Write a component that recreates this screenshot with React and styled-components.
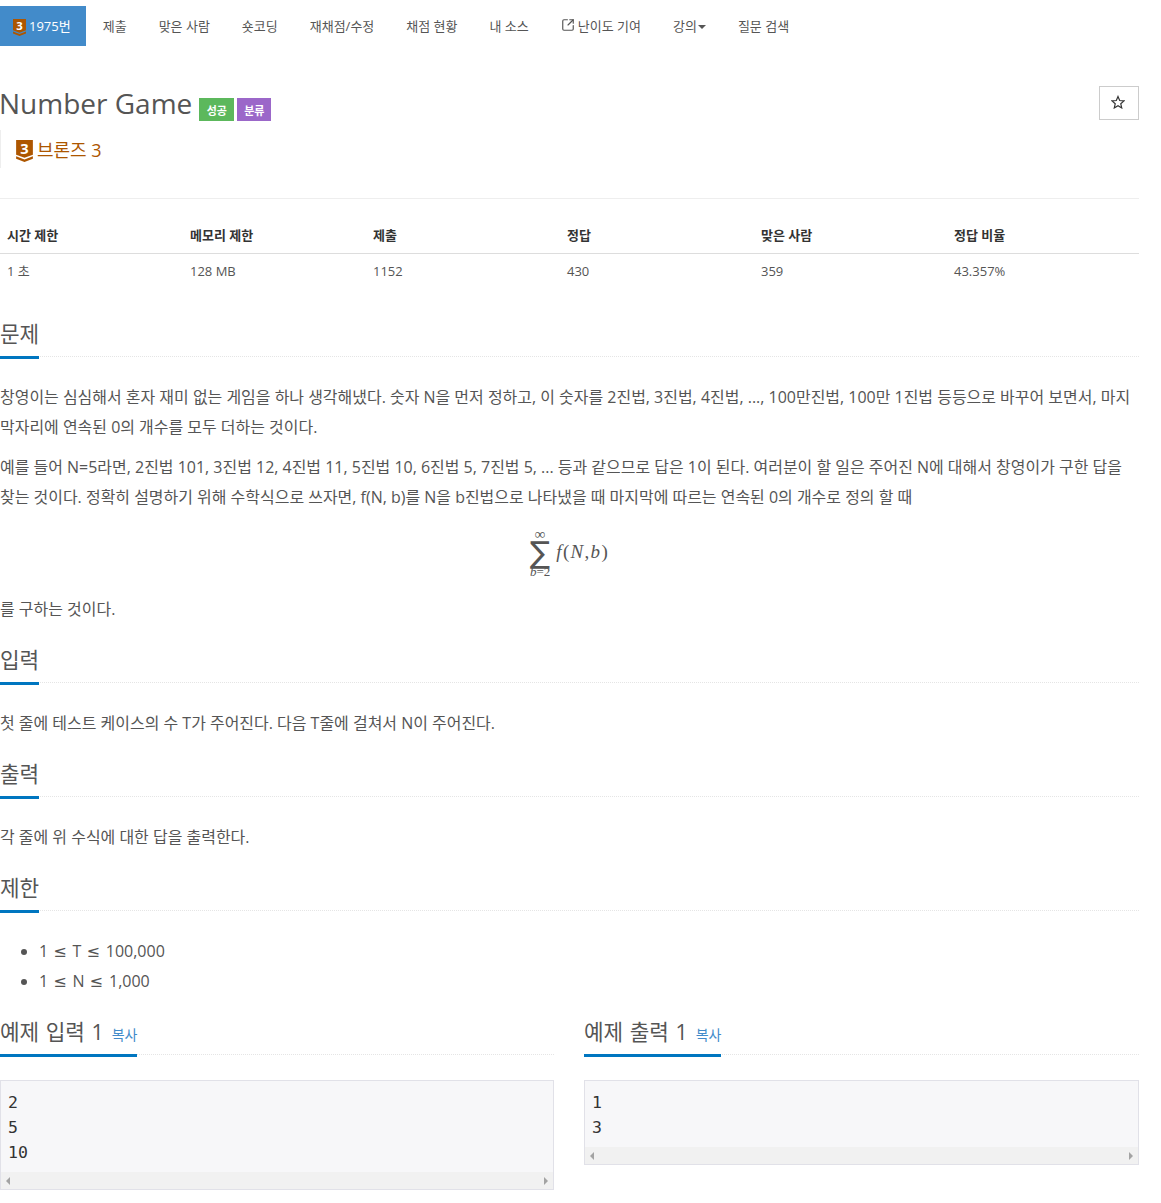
import React from 'react'
import styled, { createGlobalStyle } from 'styled-components'
import { SquareArrowOutUpRight } from 'lucide-react'

const GlobalStyle = createGlobalStyle`
  body {
    margin: 0;
    background: #fff;
    color: #555;
    font-family: "Open Sans", "Noto Sans CJK KR", sans-serif;
    font-size: 13px;
  }
`

const Page = styled.div`
  width: 1139px;
  height: 1203px;
  overflow: hidden;
`

const Nav = styled.ul`
  display: flex;
  margin: 0;
  padding: 6px 0 0;
  list-style: none;
`

const NavItem = styled.li`
  display: flex;
  align-items: center;
  gap: ${p => (p.$gap ?? 1)}px;
  height: 40px;
  box-sizing: border-box;
  padding: ${p => (p.$active ? '0 15px 2px 13px' : '0 16px 2px')};
  margin-right: ${p => (p.$active ? '1px' : '0')};
  background: ${p => (p.$active ? '#428bca' : 'transparent')};
  color: ${p => (p.$active ? '#fff' : '#555')};
`

const Caret = styled.span`
  width: 0;
  height: 0;
  margin-top: 3px;
  border-top: 4px solid #555;
  border-left: 4px solid transparent;
  border-right: 4px solid transparent;
`

const TitleRow = styled.div`
  display: flex;
  align-items: flex-start;
  margin-top: 38px;
  height: 46px;
`

const Title = styled.h1`
  margin: 0 0 0 -1px;
  font-size: 28px;
  font-weight: 400;
  line-height: 38px;
  color: #555;
`

const Label = styled.span`
  display: inline-flex;
  align-items: center;
  justify-content: center;
  width: ${p => p.$width}px;
  height: 23px;
  margin-top: 14px;
  margin-left: ${p => p.$gap}px;
  background: ${p => p.$color};
  color: #fff;
  font-size: 11px;
  font-weight: 700;
`

const StarButton = styled.button`
  display: flex;
  align-items: center;
  justify-content: center;
  width: 40px;
  height: 34px;
  margin-left: auto;
  margin-top: 2px;
  padding: 0 3px 2px 0;
  background: #fff;
  border: 1px solid #ccc;
  color: #333;
`

const Tier = styled.blockquote`
  display: flex;
  align-items: center;
  gap: 4px;
  height: 38px;
  margin: 0;
  padding-left: 15px;
  border-left: 1px solid #eee;
  color: #ad5600;
  font-size: 18px;
`

const TierBadge = styled.svg`
  flex: none;
  margin-top: ${p => p.$top}px;
  overflow: visible;
`

const Rule = styled.hr`
  margin: 30px 0 0;
  border: 0;
  border-top: 1px solid #eee;
`

const Table = styled.div`
  display: grid;
  grid-template-columns: 183px 183px 194px 194px 193px 192px;
  margin-top: 17px;
`

const HeadCell = styled.div`
  height: 38px;
  padding: 10px 7px 0;
  box-sizing: border-box;
  border-bottom: 1px solid #ddd;
  color: #333;
  font-weight: 700;
  font-size: 13px;
  line-height: 18px;
`

const BodyCell = styled.div`
  height: 36px;
  padding: 8px 7px 0;
  box-sizing: border-box;
  line-height: 18px;
`

const Section = styled.section`
  margin-top: ${p => p.$top}px;
`

const Heading = styled.div`
  display: flex;
  align-items: flex-start;
  border-bottom: 1px dotted #e5e5e5;
  height: 36px;
`

const HeadingText = styled.h2`
  margin: 0;
  height: 39px;
  box-sizing: border-box;
  border-bottom: 3px solid #0076c0;
  font-size: 21.3px;
  font-weight: 400;
  word-spacing: 1px;
  line-height: 28px;
  color: #555;
`

const CopyLink = styled.span`
  margin-left: 8px;
  font-size: 14px;
  color: #428bca;
`

const Text = styled.p`
  margin: ${p => p.$top ?? 25}px 0 0;
  font-size: 15.97px;
  line-height: 30px;
  color: #555;
`

const Formula = styled.div`
  display: flex;
  align-items: center;
  justify-content: center;
  gap: 6px;
  height: 82px;
  font-family: "Liberation Serif", "DejaVu Serif", serif;
  color: #555;
`

const SumStack = styled.div`
  display: flex;
  flex-direction: column;
  align-items: center;
  font-size: 13px;
  line-height: 10px;
`

const InfinitySign = styled.span`
  font-size: 15px;
`

const SumSign = styled.span`
  height: 28px;
  font-family: "DejaVu Sans", sans-serif;
  font-size: 30px;
  line-height: 28px;
`

const MathText = styled.span`
  font-size: 19px;
  letter-spacing: 1.3px;
  margin-top: -3px;
`

const Bullets = styled.ul`
  margin: 25px 0 0;
  padding-left: 39px;
  font-size: 16px;
  line-height: 30px;
`

const Leq = styled.span`
  margin: 0 6px 0 5px;
  font-family: "DejaVu Sans", sans-serif;
  line-height: 1;
`

const Samples = styled.div`
  display: grid;
  grid-template-columns: 554px 555px;
  column-gap: 30px;
  margin-top: 22px;
`

const SampleBox = styled.div`
  margin-top: 25px;
  background: #f7f7f9;
  border: 1px solid #e1e1e8;
`

const SampleText = styled.pre`
  margin: 0;
  padding: 9px 7px 0;
  height: ${p => p.$lines * 25 + 7}px;
  box-sizing: content-box;
  font-family: "DejaVu Sans Mono", monospace;
  font-size: 16.5px;
  line-height: 25px;
  color: #333;
`

const ScrollBar = styled.div`
  display: flex;
  align-items: center;
  justify-content: space-between;
  height: 17px;
  padding: 0 5px;
  background: #f1f1f1;
`

const ScrollArrow = styled.span`
  width: 0;
  height: 0;
  border-top: 4px solid transparent;
  border-bottom: 4px solid transparent;
  ${p => (p.$right ? 'border-left: 4px solid #a3a3a3;' : 'border-right: 4px solid #a3a3a3;')}
`

const TierIcon = ({ width, height, top }) => (
  <TierBadge $top={top} width={width} height={height} viewBox="0 0 16 21">
    <path d="M0 0h16v14l-8 3-8-3z" fill="#ad5600" />
    <path d="M0 15.5l8 3 8-3V18l-8 3-8-3z" fill="#ad5600" />
    <text x="8" y="13" fontSize="14" fontWeight="700" textAnchor="middle" fill="#fff" fontFamily="Open Sans, sans-serif">3</text>
  </TierBadge>
)

const StarIcon = () => (
  <svg width="14" height="14" viewBox="0 0 24 24" fill="none" stroke="currentColor" strokeWidth="2">
    <path d="M12 2.5l2.9 6.9 7.4.6-5.6 4.9 1.7 7.3L12 18.4l-6.4 3.8 1.7-7.3L1.7 10l7.4-.6z" />
  </svg>
)

const Sample = ({ title, lines }) => (
  <div>
    <Heading>
      <HeadingText>{title}<CopyLink>복사</CopyLink></HeadingText>
    </Heading>
    <SampleBox>
      <SampleText $lines={lines.length}>{lines.join('\n')}</SampleText>
      <ScrollBar><ScrollArrow /><ScrollArrow $right /></ScrollBar>
    </SampleBox>
  </div>
)

const heads = ['시간 제한', '메모리 제한', '제출', '정답', '맞은 사람', '정답 비율']
const cells = ['1 초', '128 MB', '1152', '430', '359', '43.357%']

export default function App() {
  return (
    <Page>
      <GlobalStyle />
      <Nav>
        <NavItem $active $gap={3}><TierIcon width={13} height={17} top={4} />1975번</NavItem>
        <NavItem>제출</NavItem>
        <NavItem>맞은 사람</NavItem>
        <NavItem>숏코딩</NavItem>
        <NavItem>재채점/수정</NavItem>
        <NavItem>채점 현황</NavItem>
        <NavItem>내 소스</NavItem>
        <NavItem $gap={3}><SquareArrowOutUpRight size={14} />난이도 기여</NavItem>
        <NavItem>강의<Caret /></NavItem>
        <NavItem>질문 검색</NavItem>
      </Nav>
      <TitleRow>
        <Title>Number Game</Title>
        <Label $color="#5cb85c" $gap={7} $width={35}>성공</Label>
        <Label $color="#9b67c9" $gap={3} $width={34}>분류</Label>
        <StarButton><StarIcon /></StarButton>
      </TitleRow>
      <Tier><TierIcon width={17} height={22} top={4} />브론즈 3</Tier>
      <Rule />
      <Table>
        {heads.map(h => <HeadCell key={h}>{h}</HeadCell>)}
        {cells.map(c => <BodyCell key={c}>{c}</BodyCell>)}
      </Table>
      <Section $top={30}>
        <Heading><HeadingText>문제</HeadingText></Heading>
        <Text>창영이는 심심해서 혼자 재미 없는 게임을 하나 생각해냈다. 숫자 N을 먼저 정하고, 이 숫자를 2진법, 3진법, 4진법, ..., 100만진법, 100만 1진법 등등으로 바꾸어 보면서, 마지막자리에 연속된 0의 개수를 모두 더하는 것이다.</Text>
        <Text $top={10}>예를 들어 N=5라면, 2진법 101, 3진법 12, 4진법 11, 5진법 10, 6진법 5, 7진법 5, ... 등과 같으므로 답은 1이 된다. 여러분이 할 일은 주어진 N에 대해서 창영이가 구한 답을 찾는 것이다. 정확히 설명하기 위해 수학식으로 쓰자면, f(N, b)를 N을 b진법으로 나타냈을 때 마지막에 따르는 연속된 0의 개수로 정의 할 때</Text>
        <Formula>
          <SumStack>
            <InfinitySign>∞</InfinitySign>
            <SumSign>∑</SumSign>
            <span><i>b</i>=2</span>
          </SumStack>
          <MathText><i>f</i>(<i>N</i>,<i>b</i>)</MathText>
        </Formula>
        <Text $top={0}>를 구하는 것이다.</Text>
      </Section>
      <Section $top={22}>
        <Heading><HeadingText>입력</HeadingText></Heading>
        <Text>첫 줄에 테스트 케이스의 수 T가 주어진다. 다음 T줄에 걸쳐서 N이 주어진다.</Text>
      </Section>
      <Section $top={22}>
        <Heading><HeadingText>출력</HeadingText></Heading>
        <Text>각 줄에 위 수식에 대한 답을 출력한다.</Text>
      </Section>
      <Section $top={22}>
        <Heading><HeadingText>제한</HeadingText></Heading>
        <Bullets>
          <li>1<Leq>≤</Leq>T<Leq>≤</Leq>100,000</li>
          <li>1<Leq>≤</Leq>N<Leq>≤</Leq>1,000</li>
        </Bullets>
      </Section>
      <Samples>
        <Sample title="예제 입력 1" lines={['2', '5', '10']} />
        <Sample title="예제 출력 1" lines={['1', '3']} />
      </Samples>
    </Page>
  )
}
